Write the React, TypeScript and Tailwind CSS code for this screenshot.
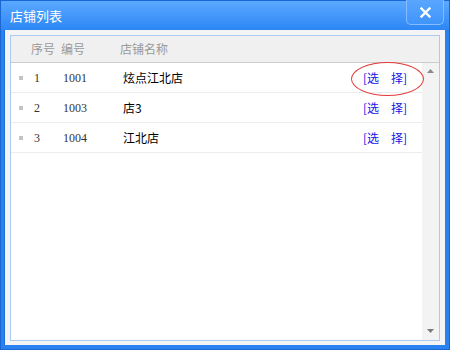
import React from 'react';

const rows = [
  { no: '1', code: '1001', name: '炫点江北店' },
  { no: '2', code: '1003', name: '店3' },
  { no: '3', code: '1004', name: '江北店' },
];

const cjk = { fontFamily: '"Noto Sans CJK SC", "Liberation Sans", sans-serif' };
const digits = { fontFamily: '"Liberation Serif", "Noto Sans CJK SC", serif' };

export default function App() {
  return (
    <div className="w-[450px] h-[350px] bg-[#2a82f1] border border-[#1a66d2] flex flex-col" style={cjk}>
      {/* Title bar */}
      <div className="relative h-[29px] shrink-0 bg-gradient-to-b from-[#5aa9ff] to-[#2c86f5] flex items-center pl-[9px]">
        <span className="text-[13px] text-white leading-none">店铺列表</span>
        <button className="absolute right-[5px] top-[-1px] w-[38px] h-[25px] border border-t-0 border-[#86bcff] rounded-b-[5px] bg-gradient-to-b from-[#5aa6ff] to-[#3f95fb] flex items-center justify-center">
          <svg width="11" height="11" viewBox="0 0 11 11">
            <path d="M1.5 1.5 L9.5 9.5 M9.5 1.5 L1.5 9.5" stroke="white" strokeWidth="2.4" strokeLinecap="square" />
          </svg>
        </button>
      </div>

      {/* Panel */}
      <div className="flex-1 ml-[3px] mr-[4px] mb-[4px] bg-[#f4f4f4] border-l border-[#1b6fe0] pt-[5px] pl-[5px] pr-[5px] pb-[4px] flex">
        <div className="relative flex-1 border border-[#abcaf3] bg-white flex flex-col">
          {/* Header */}
          <div className="h-[27px] shrink-0 bg-[#f0f0f0] border-b border-[#cccccc] flex items-center text-[12px] text-[#999999]">
            <span className="w-[50px] pl-[20px]">序号</span>
            <span className="w-[59px]">编号</span>
            <span>店铺名称</span>
          </div>

          <div className="flex-1 flex">
            {/* Rows */}
            <div className="flex-1">
              {rows.map((r) => (
                <div key={r.no} className="h-[30px] border-b border-[#ececec] flex items-center text-[12px] text-[#333333] pl-[8px]">
                  <span className="w-[15px] flex items-center">
                    <span className="w-[4px] h-[4px] bg-[#c4c4c4]" />
                  </span>
                  <span className="w-[29px]" style={digits}>{r.no}</span>
                  <span className="w-[60px]" style={digits}>{r.code}</span>
                  <span className="w-[240px] text-black">{r.name}</span>
                  <span className="text-[#1414e6]">[选　择]</span>
                </div>
              ))}
            </div>

            {/* Scrollbar */}
            <div className="w-[17px] bg-[#f3f3f3] flex flex-col items-center justify-between pt-[6px] pb-[7px]">
              <svg width="7" height="4" viewBox="0 0 7 4">
                <path d="M3.5 0 L7 4 L0 4 Z" fill="#8a8a8a" />
              </svg>
              <svg width="7" height="4" viewBox="0 0 7 4">
                <path d="M0 0 L7 0 L3.5 4 Z" fill="#7a7a7a" />
              </svg>
            </div>
          </div>

          {/* Red highlight ellipse */}
          <div className="absolute left-[340px] top-[26px] w-[73px] h-[34px] rounded-[50%] border border-[#e53a3a]" />
        </div>
      </div>
    </div>
  );
}
